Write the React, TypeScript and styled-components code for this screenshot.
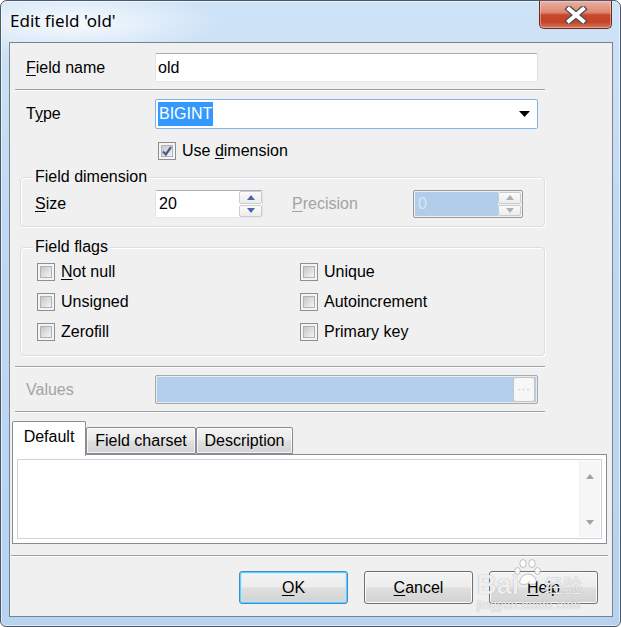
import React from "react";
import styled, { createGlobalStyle } from "styled-components";

const FONT = `"Liberation Sans", Arial, sans-serif`;

const Global = createGlobalStyle`
  html, body { margin: 0; padding: 0; background: #ffffff; }
  #root { width: 621px; height: 627px; }
  * { box-sizing: border-box; }
`;

const Window = styled.div`
  width: 621px;
  height: 627px;
  border: 1px solid #4a5a6c;
  border-radius: 7px 7px 6px 6px;
  background:
    radial-gradient(ellipse 150px 34px at 70px 22px, rgba(255,255,255,0.85), rgba(255,255,255,0) 100%),
    linear-gradient(180deg, #cfe3f7 0%, #c0d9f2 35%, #b7d3ef 100%);
  box-shadow: inset 0 0 0 1px rgba(255,255,255,0.55);
  display: flex;
  flex-direction: column;
  font-family: ${FONT};
  overflow: hidden;
`;

const TitleBar = styled.div`
  height: 41px;
  display: flex;
  justify-content: space-between;
  align-items: flex-start;
  padding: 0 8px 0 9px;
`;

const TitleText = styled.div`
  margin-top: 8px;
  font-family: "Noto Sans", "Open Sans", sans-serif;
  font-size: 17px;
  line-height: 24px;
  color: #000;
`;

const CloseButton = styled.div`
  width: 73px;
  height: 28px;
  display: flex;
  align-items: center;
  justify-content: center;
  border: 1px solid #6b2a1e;
  border-top: none;
  border-radius: 0 0 5px 5px;
  background: linear-gradient(180deg, #eab1a3 0%, #df8771 42%, #c8462c 52%, #c1442a 78%, #d9775a 100%);
  box-shadow: inset 0 0 0 1px rgba(255, 220, 210, 0.45);
`;

const Client = styled.div`
  position: relative;
  flex: 1;
  margin: 0 7px 9px 8px;
  border: 1px solid #77838f;
  background: #f0f0f0;
  display: flex;
  flex-direction: column;
  padding-top: 10px;
  font-size: 16px;
  color: #000;
`;

const FormRow = styled.div<{ $top: number; $h: number }>`
  display: grid;
  grid-template-columns: 129px 383px;
  align-items: center;
  padding-left: 16px;
  margin-top: ${(p) => p.$top}px;
  height: ${(p) => p.$h}px;
`;

const Label = styled.span<{ $disabled?: boolean }>`
  font-size: 16px;
  line-height: 18px;
  color: ${(p) => (p.$disabled ? "#a3a3a3" : "#000")};
  white-space: nowrap;
  u { text-underline-offset: 2px; }
`;

const Separator = styled.div<{ $top: number; $left: number; $w: number }>`
  margin-top: ${(p) => p.$top}px;
  margin-left: ${(p) => p.$left}px;
  width: ${(p) => p.$w}px;
  height: 2px;
  border-top: 1px solid #a0a0a0;
  border-bottom: 1px solid #ffffff;
`;

const TextBox = styled.div`
  height: 100%;
  border: 1px solid;
  border-color: #abadb3 #dbdfe6 #e3e9ef #e2e3ea;
  border-radius: 2px;
  background: #fff;
  display: flex;
  align-items: center;
  padding-left: 2px;
  font-size: 16px;
`;

const Combo = styled.div`
  height: 100%;
  border: 1px solid #7eb4ea;
  border-radius: 2px;
  background: #fff;
  display: flex;
  align-items: center;
  justify-content: space-between;
  padding: 0 7px 0 2px;
`;

const Selected = styled.span`
  background: #3399ff;
  color: #fff;
  padding: 2px 1px;
  line-height: 20px;
`;

const CheckRow = styled.label`
  display: flex;
  align-items: center;
  gap: 6px;
  font-size: 16px;
  white-space: nowrap;
  u { text-underline-offset: 2px; }
`;

const CheckBox = styled.span`
  position: relative;
  width: 18px;
  height: 18px;
  flex: none;
  border: 1px solid #8e8f8f;
  background: #f4f4f4;
  display: flex;
  align-items: center;
  justify-content: center;
  &::before {
    content: "";
    position: absolute;
    inset: 2px;
    border: 1px solid #aeb3b9;
    background: linear-gradient(135deg, #c6c6c6 0%, #e0e0e0 55%, #f4f4f4 100%);
  }
  svg { position: relative; }
`;

const UseDimCell = styled.div`
  grid-column: 2;
  padding-left: 3px;
`;

const Group = styled.div<{ $top: number }>`
  margin: ${(p) => p.$top}px 0 0 10px;
  width: 525px;
  border: 1px solid #d5dfe5;
  border-radius: 4px;
  box-shadow: inset 1px 1px 0 #ffffff, 1px 1px 0 #ffffff;
`;

const GroupTitle = styled.div`
  width: fit-content;
  margin: -10px 0 0 12px;
  padding: 0 2px;
  background: #f0f0f0;
  font-size: 16px;
  line-height: 18px;
`;

const DimRow = styled.div`
  display: grid;
  grid-template-columns: 120px 108px 29px 121px 110px;
  align-items: center;
  padding-left: 14px;
  margin: 4px 0 8px;
  height: 28px;
`;

const Spin = styled.div<{ $disabled?: boolean }>`
  grid-column: ${(p) => (p.$disabled ? 5 : 2)};
  height: 28px;
  display: flex;
  border: 1px solid;
  border-color: ${(p) => (p.$disabled ? "#9a9a9a" : "#abadb3 #dbdfe6 #e3e9ef #e2e3ea")};
  border-radius: 2px;
  background: ${(p) => (p.$disabled ? "#f0f0f0" : "#fff")};
  padding: ${(p) => (p.$disabled ? "1px" : "0")};
`;

const SpinField = styled.div<{ $disabled?: boolean }>`
  flex: 1;
  display: flex;
  align-items: center;
  padding-left: 3px;
  background: ${(p) => (p.$disabled ? "#b1cdea" : "#fff")};
  color: ${(p) => (p.$disabled ? "#dbe6f2" : "#000")};
  font-size: 16px;
`;

const SpinButtons = styled.div`
  width: 23px;
  display: flex;
  flex-direction: column;
  gap: 1px;
`;

const SpinBtn = styled.div`
  flex: 1;
  border: 1px solid #c9ccd2;
  border-radius: 2px;
  background: linear-gradient(180deg, #fbfbfb 0%, #ececec 100%);
  display: flex;
  align-items: center;
  justify-content: center;
`;

const FlagGrid = styled.div`
  display: grid;
  grid-template-columns: 263px auto;
  grid-auto-rows: 30px;
  align-items: center;
  padding-left: 16px;
  margin: 1px 0 8px;
`;

const ValueField = styled.div`
  height: 100%;
  border: 1px solid #a8a8a8;
  border-radius: 2px;
  background: #b3cfec;
  box-shadow: inset 0 0 0 1px #e4ecf4;
  display: flex;
  justify-content: flex-end;
  align-items: center;
  padding-right: 2px;
`;

const EllipsisBtn = styled.div`
  width: 22px;
  height: 25px;
  border: 1px solid #c4c4c4;
  border-radius: 3px;
  background: #f7f7f7;
  color: #b5b5b5;
  font-size: 10px;
  letter-spacing: 1px;
  display: flex;
  align-items: center;
  justify-content: center;
`;

const TabArea = styled.div`
  margin: 8px 0 0 2px;
  width: 595px;
`;

const TabStrip = styled.div`
  display: flex;
  align-items: flex-end;
  height: 33px;
`;

const Tab = styled.div<{ $active?: boolean; $w: number }>`
  position: relative;
  z-index: ${(p) => (p.$active ? 1 : 0)};
  width: ${(p) => p.$w}px;
  height: ${(p) => (p.$active ? 35 : 27)}px;
  margin-bottom: ${(p) => (p.$active ? -2 : 0)}px;
  border: 1px solid #898c95;
  border-bottom: ${(p) => (p.$active ? "none" : "1px solid #898c95")};
  border-radius: 2px 2px 0 0;
  background: ${(p) =>
    p.$active ? "#ffffff" : "linear-gradient(180deg, #f3f3f3 0%, #ebebeb 45%, #dedede 55%, #d3d3d3 100%)"};
  box-shadow: ${(p) => (p.$active ? "none" : "inset 0 0 0 1px rgba(255,255,255,0.7)")};
  display: flex;
  justify-content: center;
  padding-top: ${(p) => (p.$active ? 6 : 4)}px;
  font-size: 16px;
  line-height: 18px;
`;

const TabPanel = styled.div`
  height: 90px;
  border: 1px solid #898c95;
  background: #ffffff;
  padding: 4px;
`;

const Memo = styled.div`
  height: 100%;
  border: 1px solid #cfd2d6;
  background: #fff;
  display: flex;
  justify-content: flex-end;
  padding: 1px;
`;

const ScrollBar = styled.div`
  width: 21px;
  background: #f6f6f6;
  border-left: 1px solid #efefef;
  display: flex;
  flex-direction: column;
  justify-content: space-between;
  align-items: center;
  padding: 13px 0 12px;
`;

const ButtonRow = styled.div`
  margin-top: 14px;
  display: flex;
  justify-content: flex-end;
  gap: 16px;
  padding-right: 14px;
`;

const Button = styled.div<{ $default?: boolean }>`
  width: 109px;
  height: 33px;
  border: 1px solid ${(p) => (p.$default ? "#3c8dc8" : "#707070")};
  border-radius: 3px;
  background: linear-gradient(180deg, #f4f4f4 0%, #ececec 48%, #dfdfdf 52%, #d2d2d2 100%);
  box-shadow: ${(p) =>
    p.$default ? "inset 0 0 0 1px #5fd0f5, inset 0 0 0 2px rgba(180,235,252,0.6)" : "inset 0 0 0 1px #fbfbfb"};
  display: flex;
  align-items: center;
  justify-content: center;
  font-size: 16px;
  u { text-underline-offset: 2px; }
`;

const Watermark = styled.div`
  position: absolute;
  right: 27px;
  bottom: 4px;
  width: 108px;
  pointer-events: none;
  color: rgba(255, 255, 255, 0.85);
  font-family: ${FONT};
`;

const WmTop = styled.div`
  display: flex;
  align-items: flex-end;
  height: 38px;
`;

const WmBai = styled.span`
  font-size: 27px;
  font-weight: bold;
  line-height: 24px;
  text-shadow: 0 0 1px rgba(110, 110, 110, 0.7);
`;

const WmPaw = styled.svg`
  align-self: flex-start;
  margin-left: -5px;
  flex: none;
`;

const WmCn = styled.span`
  margin-left: 2px;
  font-family: "Noto Sans CJK SC", sans-serif;
  font-size: 19px;
  line-height: 24px;
  text-shadow: 0 0 1px rgba(110, 110, 110, 0.7);
`;

const WmUrl = styled.div`
  margin-top: 2px;
  font-size: 12px;
  line-height: 13px;
  letter-spacing: 0.4px;
  text-shadow: 0 0 1px rgba(110, 110, 110, 0.7);
`;

const Up = ({ color }: { color: string }) => (
  <svg width="8" height="5" viewBox="0 0 8 5"><polygon points="0,5 8,5 4,0" fill={color} /></svg>
);
const Down = ({ color }: { color: string }) => (
  <svg width="8" height="5" viewBox="0 0 8 5"><polygon points="0,0 8,0 4,5" fill={color} /></svg>
);

const Check = ({ checked }: { checked?: boolean }) => (
  <CheckBox>
    {checked && (
      <svg width="12" height="12" viewBox="0 0 12 12">
        <path d="M2 6.5 L4.8 9.5 L10 2" stroke="#4a5b92" strokeWidth="2.2" fill="none" />
      </svg>
    )}
  </CheckBox>
);

const SpinEdit = ({ value, disabled }: { value: string; disabled?: boolean }) => (
  <Spin $disabled={disabled}>
    <SpinField $disabled={disabled}>{value}</SpinField>
    <SpinButtons>
      <SpinBtn><Up color={disabled ? "#b0b0b0" : "#4c67a8"} /></SpinBtn>
      <SpinBtn><Down color={disabled ? "#b0b0b0" : "#4c67a8"} /></SpinBtn>
    </SpinButtons>
  </Spin>
);

export default function App() {
  return (
    <>
      <Global />
      <Window>
        <TitleBar>
          <TitleText>Edit field 'old'</TitleText>
          <CloseButton>
            <svg width="26" height="18" viewBox="0 0 26 18">
              <path d="M6 3 L20 15 M20 3 L6 15" stroke="#4d4d4d" strokeWidth="6.5" strokeLinecap="square" fill="none" />
              <path d="M6 3 L20 15 M20 3 L6 15" stroke="#ffffff" strokeWidth="4" strokeLinecap="square" fill="none" />
            </svg>
          </CloseButton>
        </TitleBar>
        <Client>
          <FormRow $top={0} $h={29}>
            <Label><u>F</u>ield name</Label>
            <TextBox>old</TextBox>
          </FormRow>
          <Separator $top={7} $left={5} $w={530} />
          <FormRow $top={8} $h={30}>
            <Label>T<u>y</u>pe</Label>
            <Combo>
              <Selected>BIGINT</Selected>
              <svg width="11" height="6" viewBox="0 0 11 6"><polygon points="0,0 11,0 5.5,6" fill="#000" /></svg>
            </Combo>
          </FormRow>
          <FormRow $top={12} $h={20}>
            <UseDimCell>
              <CheckRow><Check checked /><span>Use <u>d</u>imension</span></CheckRow>
            </UseDimCell>
          </FormRow>
          <Group $top={16}>
            <GroupTitle>Field dimension</GroupTitle>
            <DimRow>
              <Label><u>S</u>ize</Label>
              <SpinEdit value="20" />
              <span />
              <Label $disabled><u>P</u>recision</Label>
              <SpinEdit value="0" disabled />
            </DimRow>
          </Group>
          <Group $top={20}>
            <GroupTitle>Field flags</GroupTitle>
            <FlagGrid>
              <CheckRow><Check /><span><u>N</u>ot null</span></CheckRow>
              <CheckRow><Check /><span>Unique</span></CheckRow>
              <CheckRow><Check /><span>Unsigned</span></CheckRow>
              <CheckRow><Check /><span>Autoincrement</span></CheckRow>
              <CheckRow><Check /><span>Zerofill</span></CheckRow>
              <CheckRow><Check /><span>Primary key</span></CheckRow>
            </FlagGrid>
          </Group>
          <Separator $top={10} $left={5} $w={530} />
          <FormRow $top={7} $h={29}>
            <Label $disabled>Values</Label>
            <ValueField><EllipsisBtn>···</EllipsisBtn></ValueField>
          </FormRow>
          <Separator $top={7} $left={5} $w={530} />
          <TabArea>
            <TabStrip>
              <Tab $active $w={74}>Default</Tab>
              <Tab $w={110}>Field charset</Tab>
              <Tab $w={97}>Description</Tab>
            </TabStrip>
            <TabPanel>
              <Memo>
                <ScrollBar>
                  <Up color="#a3a3a3" />
                  <Down color="#a3a3a3" />
                </ScrollBar>
              </Memo>
            </TabPanel>
          </TabArea>
          <Separator $top={11} $left={1} $w={597} />
          <ButtonRow>
            <Button $default><span><u>O</u>K</span></Button>
            <Button><span><u>C</u>ancel</span></Button>
            <Button><span><u>H</u>elp</span></Button>
          </ButtonRow>
          <Watermark>
            <WmTop>
              <WmBai>Bai</WmBai>
              <WmPaw width="28" height="26" viewBox="0 0 28 26">
                <g fill="rgba(255,255,255,0.85)" stroke="rgba(120,120,120,0.55)" strokeWidth="0.8">
                  <ellipse cx="9" cy="4.5" rx="3.2" ry="4" />
                  <ellipse cx="18" cy="4.5" rx="3.2" ry="4" />
                  <ellipse cx="3.5" cy="12" rx="2.8" ry="3.4" />
                  <ellipse cx="23.5" cy="12" rx="2.8" ry="3.4" />
                  <path d="M6 22 C8 13 19 13 22 21 C24 26 17 26 14 24.5 C11 26 4 26 6 22 Z" />
                </g>
              </WmPaw>
              <WmCn>经验</WmCn>
            </WmTop>
            <WmUrl>jingyan.baidu.com</WmUrl>
          </Watermark>
        </Client>
      </Window>
    </>
  );
}
